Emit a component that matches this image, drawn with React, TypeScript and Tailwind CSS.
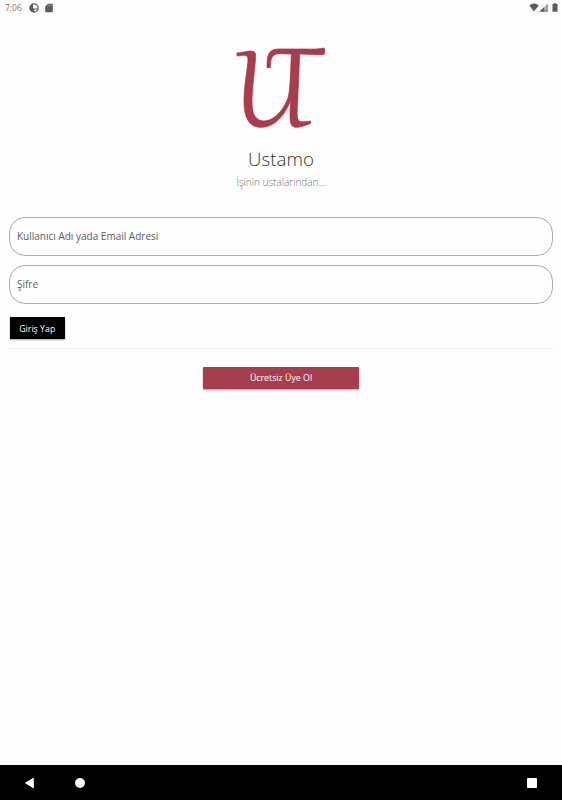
import type { ReactNode } from 'react'

function StatusBar() {
  return (
    <div className="flex h-4 items-center justify-between pl-[5px] pr-[4px] text-[#5c5c5c]">
      <div className="flex items-center">
        <span className="w-[24px] text-[8.5px] leading-4 text-[#777]">7:06</span>
        <svg className="block" width="10" height="10" viewBox="0 0 10 10">
          <circle cx="5" cy="5" r="4.1" fill="none" stroke="currentColor" strokeWidth="1.3" />
          <path d="M4 .9C2 1.4.8 3 .8 5S2 8.7 5.3 9.2V6.4h3.5V5.4H4z" fill="currentColor" />
        </svg>
        <svg className="ml-[6px] block" width="8" height="10" viewBox="0 0 8 10">
          <path d="M2.8.7H7q.8 0 .8.8v7q0 .8-.8.8H1q-.8 0-.8-.8V3.4z" fill="currentColor" />
          <path d="M3 1.8v1.5M4.6 1.8v1.5M6.2 1.8v1.5" stroke="#bbb" strokeWidth=".7" />
        </svg>
      </div>
      <div className="flex items-center pb-px">
        <svg className="block" width="10" height="9" viewBox="0 0 10 9">
          <path d="M.3 2.6Q5-1.4 9.7 2.6L5 8.5z" fill="currentColor" />
        </svg>
        <svg className="block" width="9" height="9" viewBox="0 0 9 9">
          <path d="M8.5.7v7.8H.5z" fill="#c4c4c4" />
          <path d="M5.3 3.9v4.6H.5zM7.6 1.5h.9v7h-.9z" fill="currentColor" />
          <path d="M.5 8.5h8v-.9h-7z" fill="currentColor" />
        </svg>
        <svg className="ml-[4px] block" width="6" height="9" viewBox="0 0 6 9">
          <path d="M1.8.2h2.4V1h1.3v7.8h-5V1h1.3z" fill="currentColor" />
        </svg>
      </div>
    </div>
  )
}

function Logo() {
  return (
    <svg className="block -translate-x-px" width="110" height="95" viewBox="0 0 330 285">
      <path
        d="M35 39C54 38 63 33 78 33Q92 33 92 45C92 70 81 145 81 185C81 224 93 243 117 243C151 243 183 200 191 165C196 140 197 85 199 42L165 41C145 41 136 49 136 83H126C126 46 130 27 160 27H235C270 28 280 27 298 24Q301 33 298 42Q294 45 284 44L224 42L218 185C215 230 216 245 229 245C240 246 248 244 257 243V250C245 256 225 262 212 262C197 261 195 247 195 225C195 205 197 190 197 180C181 225 149 262 108 262C70 262 57 230 57 182C57 133 69 80 69 57Q69 46 58 46C49 46 43 48 37 48Z"
        fill="#a63e4e"
        stroke="#ae2b43"
        strokeWidth="2"
      />
    </svg>
  )
}

function Field({ children }: { children: ReactNode }) {
  return (
    <div className="flex h-[39px] items-center rounded-[16px] border border-[#aaa] px-[7px] text-[10px] text-[#5c5c5c]">
      {children}
    </div>
  )
}

function NavBar() {
  return (
    <div className="flex h-[35px] items-center bg-black pl-6 pr-[25px] text-white">
      <svg className="block" width="10" height="12" viewBox="0 0 10 12">
        <path d="M.7 6 9.8.6v10.8z" fill="currentColor" />
      </svg>
      <div className="ml-[41px] size-[10px] rounded-full bg-white" />
      <div className="ml-auto size-[10px] rounded-[1px] bg-white" />
    </div>
  )
}

export default function App() {
  return (
    <div className="flex h-screen flex-col bg-[#fdfdfd] font-['Open_Sans','Noto_Sans',sans-serif]">
      <StatusBar />
      <main className="flex flex-1 flex-col px-[9px] pt-6">
        <div className="flex flex-col items-center">
          <Logo />
          <h1 className="mt-[10px] text-[18.7px] font-light leading-7 text-[#333]">Ustamo</h1>
          <p className="mt-px text-[10px] font-light leading-4 text-[#777]">İşinin ustalarından...</p>
        </div>

        <div className="mt-[27px] flex flex-col gap-[9px]">
          <Field>Kullanıcı Adı yada Email Adresi</Field>
          <Field>Şifre</Field>
        </div>

        <button className="ml-[0.5px] mt-[13px] flex h-[22px] w-[55.5px] items-center justify-center rounded-[0.5px] bg-black pt-[2px] text-[8.8px] leading-3 text-white shadow-[0_1px_2px_rgba(0,0,0,0.35)]">
          Giriş Yap
        </button>
        <div className="mt-[9px] h-px bg-[#f1f1f1]" />
        <button className="mt-[17.5px] flex h-[22px] w-[156px] items-center justify-center self-center rounded-[1px] bg-[#a63e4e] pt-px text-[8.8px] leading-3 text-white shadow-[0_1px_2px_rgba(0,0,0,0.35)]">
          Ücretsiz Üye Ol
        </button>
      </main>
      <NavBar />
    </div>
  )
}
